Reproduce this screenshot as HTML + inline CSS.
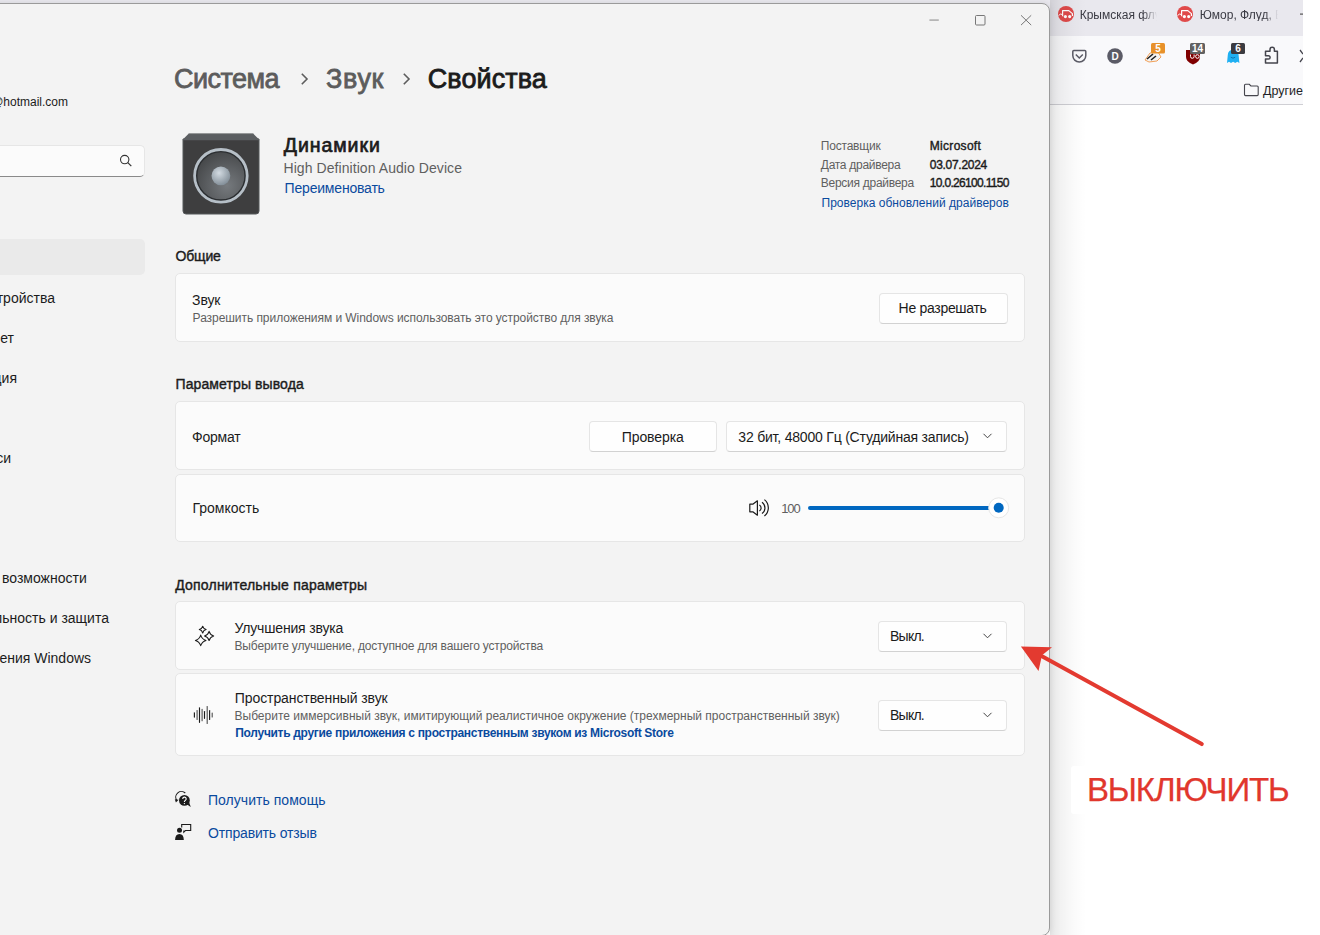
<!DOCTYPE html>
<html><head><meta charset="utf-8">
<style>
html,body{margin:0;padding:0;}
body{width:1320px;height:935px;overflow:hidden;position:relative;background:#ffffff;font-family:"Liberation Sans",sans-serif;}
.t{position:absolute;white-space:nowrap;line-height:1;}
.abs{position:absolute;}
#browser{position:absolute;left:0;top:0;width:1303px;height:935px;background:#ffffff;overflow:hidden;}
#tabbar{position:absolute;left:0;top:0;width:1303px;height:36px;background:#e9e8ee;}
#toolbar{position:absolute;left:0;top:36px;width:1303px;height:68px;background:#f9f9fb;border-bottom:1px solid #cfcfd4;}
#win{position:absolute;left:-20px;top:3px;width:1068px;height:931px;background:#f3f3f3;border:1px solid #9a9a9a;border-radius:0 8px 8px 0;box-shadow:0 0 6px rgba(0,0,0,0.10);overflow:hidden;}
#winin{position:absolute;left:19px;top:-4px;width:1049px;height:935px;}
.card{position:absolute;left:175px;width:848px;background:#fbfbfb;border:1px solid #e6e6e6;border-radius:5px;}
.btn{position:absolute;background:#fefefe;border:1px solid #e5e5e5;border-bottom-color:#d2d2d2;border-radius:4px;box-sizing:border-box;}
</style></head>
<body>
<div id="browser">
  <div id="tabbar"></div>
  <div id="toolbar"></div>
  <svg class="abs" style="left:1050px;top:0" width="270" height="110" viewBox="1050 0 270 110">
    <!-- tab favicons -->
    <circle cx="1066" cy="14" r="8" fill="#e04a4a"/>
    <g transform="translate(0,0)"><path d="M1062.6 16.2 V10.6 H1068.8 L1072.4 13.6 V16" fill="none" stroke="#fff" stroke-width="1.2" stroke-linejoin="round"/>
    <path d="M1058.6 15.6 q1.6 -2.4 3.6 -1.2" fill="none" stroke="#fff" stroke-width="1"/>
    <circle cx="1065.4" cy="16.6" r="1.6" fill="#fff"/><circle cx="1069.7" cy="16.6" r="1.6" fill="#fff"/></g>
    <circle cx="1185" cy="14" r="8" fill="#e04a4a"/>
    <g transform="translate(119,0)"><path d="M1062.6 16.2 V10.6 H1068.8 L1072.4 13.6 V16" fill="none" stroke="#fff" stroke-width="1.2" stroke-linejoin="round"/>
    <path d="M1058.6 15.6 q1.6 -2.4 3.6 -1.2" fill="none" stroke="#fff" stroke-width="1"/>
    <circle cx="1065.4" cy="16.6" r="1.6" fill="#fff"/><circle cx="1069.7" cy="16.6" r="1.6" fill="#fff"/></g>
    <rect x="1300" y="13.5" width="3" height="1.2" fill="#555"/>
    <!-- pocket -->
    <path d="M1073.8 50.5 h11 a1 1 0 0 1 1 1 v4 a6.5 6.5 0 0 1 -13 0 v-4 a1 1 0 0 1 1 -1z" fill="none" stroke="#5b5b66" stroke-width="1.5"/>
    <path d="M1075.8 54.5 l3.5 3.5 l3.5 -3.5" fill="none" stroke="#5b5b66" stroke-width="1.5"/>
    <!-- D -->
    <circle cx="1115" cy="56" r="7.8" fill="#5b5b66"/>
    <text x="1115" y="59.6" font-family="Liberation Sans" font-weight="bold" font-size="10" fill="#fff" text-anchor="middle">D</text>
    <!-- badger -->
    <path d="M1145 60 l5 -7 l8 -1 l3 5 l-4 4 l-8 1z" fill="#f3f3f3" stroke="#f08a30" stroke-width="0.8"/>
    <path d="M1147 59 l6 -5 M1151 60 l5 -4" stroke="#222" stroke-width="1.6"/>
    <rect x="1151" y="43" width="14" height="10.5" rx="1.5" fill="#e8912a"/>
    <text x="1158" y="52" font-family="Liberation Sans" font-weight="bold" font-size="10" fill="#fff" text-anchor="middle">5</text>
    <!-- ublock -->
    <path d="M1186 50 h14 v7 q0 5 -7 7.5 q-7 -2.5 -7 -7.5z" fill="#800000"/>
    <path d="M1190.5 54.5 v2 a1.8 1.8 0 0 0 3.6 0 v-2 M1195.6 56.5 a1.8 1.8 0 1 0 3.6 0 a1.8 1.8 0 1 0 -3.6 0" fill="none" stroke="#fff" stroke-width="1"/>
    <rect x="1190" y="43" width="15" height="11" rx="1.5" fill="#616161"/>
    <text x="1197.5" y="52" font-family="Liberation Sans" font-weight="bold" font-size="10" fill="#fff" text-anchor="middle">14</text>
    <!-- ghost -->
    <path d="M1227 63 l0.8 -8 a5.4 5.6 0 0 1 10.8 0 l0.8 8 l-2.1 -1.3 l-2.1 1.3 l-2.1 -1.3 l-2.1 1.3 l-2 -1.3z" fill="#1fb0f2"/>
    <path d="M1230.8 57.2 q2.2 2 4.4 0" fill="none" stroke="#0b6fa8" stroke-width="0.9"/>
    <rect x="1231" y="43" width="14" height="11" rx="1.5" fill="#3b3b40"/>
    <text x="1238" y="52" font-family="Liberation Sans" font-weight="bold" font-size="10" fill="#fff" text-anchor="middle">6</text>
    <!-- puzzle -->
    <path d="M1265.5 63 v-4 h3 a1.6 1.6 0 0 0 0 -3.2 h-3 v-4.5 h4.5 v-1.8 a2.2 2.2 0 0 1 4.4 0 v1.8 h3 v11.7z" fill="none" stroke="#45454d" stroke-width="1.5" stroke-linejoin="round"/>
    <path d="M1300 50 l3 4 M1300 62 l3 -4" stroke="#45454d" stroke-width="1.3"/>
    <!-- folder -->
    <path d="M1245.5 84.3 h3.8 l1.6 1.7 h6.3 a1 1 0 0 1 1 1 v7.6 a1 1 0 0 1 -1 1 h-11.7 a1 1 0 0 1 -1 -1 v-9.3 a1 1 0 0 1 1 -1z" fill="none" stroke="#45454d" stroke-width="1.1"/>
  </svg>
  <!-- fade tab text -->
  <div class="t" style="left:1079.70px;top:8.96px;font-size:12px;color:#3b3b44;width:77px;overflow:hidden;-webkit-mask-image:linear-gradient(90deg,#000 82%,transparent 100%);">Крымская флуд</div>
<div class="t" style="left:1199.80px;top:8.96px;font-size:12px;color:#3b3b44;width:78px;overflow:hidden;-webkit-mask-image:linear-gradient(90deg,#000 84%,transparent 100%);">Юмор, Флуд, Болталка</div>
<div class="t" style="left:1263.00px;top:84.94px;font-size:12.5px;color:#1f1f27;">Другие</div>
</div>

<div class="abs" style="left:1050px;top:0;width:36px;height:935px;background:linear-gradient(90deg,rgba(0,0,0,0.10),rgba(0,0,0,0.05) 30%,rgba(0,0,0,0.02) 65%,rgba(0,0,0,0));"></div>
<div id="win"><div id="winin">
  <!-- window controls -->
  <svg class="abs" style="left:900px;top:0" width="149" height="40" viewBox="900 0 149 40">
    <rect x="929.4" y="19.6" width="9.4" height="0.9" fill="#7a7a7a"/>
    <rect x="975.5" y="15.5" width="9.5" height="9.5" rx="1" fill="none" stroke="#777" stroke-width="1"/>
    <path d="M1021 15.3 L1031.2 25.1 M1031.2 15.3 L1021 25.1" stroke="#777" stroke-width="1"/>
  </svg>
  <!-- nav -->
  <div class="abs" style="left:-20px;top:145px;width:165px;height:32px;background:#fbfbfb;border:1px solid #e6e6e6;border-bottom:1px solid #8a8a8a;border-radius:5px;box-sizing:border-box;"></div>
  <svg class="abs" style="left:118px;top:152px" width="16" height="18" viewBox="118 152 16 18">
    <circle cx="124.7" cy="159.6" r="4.2" fill="none" stroke="#333" stroke-width="1.1"/>
    <path d="M127.8 162.7 L131.3 166.2" stroke="#333" stroke-width="1.2"/>
  </svg>
  <div class="abs" style="left:-20px;top:239px;width:165px;height:36px;background:#eaeaea;border-radius:5px;"></div>

  <!-- speaker image -->
  <svg class="abs" style="left:180px;top:131px" width="84" height="86" viewBox="180 131 84 86">
    <defs>
      <radialGradient id="cone" cx="0.62" cy="0.7" r="0.75">
        <stop offset="0" stop-color="#767a7e"/><stop offset="1" stop-color="#434547"/>
      </radialGradient>
      <radialGradient id="dome" cx="0.4" cy="0.35" r="0.7">
        <stop offset="0" stop-color="#d3dbe2"/><stop offset="1" stop-color="#7f8b95"/>
      </radialGradient>
    </defs>
    <path d="M183 139 V211 a3 3 0 0 0 3 3 H256 a3 3 0 0 0 3 -3 V139z" fill="#3e3e3f" stroke="#55585b" stroke-width="1"/>
    <path d="M188.6 133.8 H253.4 L259.2 139.6 V140.2 H182.8 V139.6z" fill="#5b5e61"/>
    <path d="M188.6 133.8 H253.4" stroke="#6a6d70" stroke-width="0.8"/>
    <circle cx="220.9" cy="175.8" r="24.6" fill="url(#cone)" stroke="#2b2e31" stroke-width="2.2"/>
    <circle cx="220.9" cy="175.8" r="26.3" fill="none" stroke="#b6bfc7" stroke-width="2.8"/>
    <circle cx="220.9" cy="175.8" r="9.4" fill="url(#dome)"/>
  </svg>

  <!-- cards -->
  <div class="card" style="top:273px;height:67px;"></div>
  <div class="card" style="top:401px;height:67px;"></div>
  <div class="card" style="top:474px;height:66px;"></div>
  <div class="card" style="top:601px;height:67px;"></div>
  <div class="card" style="top:673px;height:81px;"></div>

  <div class="btn" style="left:878.5px;top:292.5px;width:129px;height:31.5px;"></div>
  <div class="btn" style="left:589px;top:421px;width:128px;height:31px;"></div>
  <div class="btn" style="left:726px;top:421px;width:281px;height:31px;"></div>
  <div class="btn" style="left:878px;top:621px;width:129px;height:31px;"></div>
  <div class="btn" style="left:878px;top:700px;width:129px;height:31px;"></div>

  <svg class="abs" style="left:0;top:0" width="1049" height="935" viewBox="0 0 1049 935">
    <!-- dropdown chevrons -->
    <path d="M983.5 433.8 l4 4 l4 -4" fill="none" stroke="#444" stroke-width="1"/>
    <path d="M983.5 633.8 l4 4 l4 -4" fill="none" stroke="#444" stroke-width="1"/>
    <path d="M983.5 712.8 l4 4 l4 -4" fill="none" stroke="#444" stroke-width="1"/>
    <!-- breadcrumb chevrons -->
    <path d="M301.8 73.8 l5.2 5.2 l-5.2 5.2" fill="none" stroke="#5c5c5c" stroke-width="1.6"/>
    <path d="M403.8 73.8 l5.2 5.2 l-5.2 5.2" fill="none" stroke="#5c5c5c" stroke-width="1.6"/>
    <!-- volume icon -->
    <g fill="none" stroke="#1b1b1b" stroke-width="1.2">
    <path d="M749.8 504.2 h3 l4.6 -3.4 v14.4 l-4.6 -3.4 h-3z" stroke-linejoin="round"/>
    <path d="M759.4 504.9 A3.5 3.5 0 0 1 759.4 510.9"/>
    <path d="M762 502.2 A7 7 0 0 1 762 513.6"/>
    <path d="M764.4 499.6 A10.5 10.5 0 0 1 764.4 516"/>
    </g>
    <!-- slider -->
    <rect x="808" y="506" width="190" height="4" rx="2" fill="#0067c0"/>
    <circle cx="998.7" cy="507.8" r="10" fill="#ffffff" stroke="#e6e6e6" stroke-width="1"/>
    <circle cx="998.7" cy="507.8" r="5" fill="#0067c0"/>
    <!-- sparkle -->
    <g fill="none" stroke="#1b1b1b" stroke-width="1.05" stroke-linejoin="round">
      <path d="M202.7 626.2 q0.7 2.7 3.4 3.4 q-2.7 0.7 -3.4 3.4 q-0.7 -2.7 -3.4 -3.4 q2.7 -0.7 3.4 -3.4z"/>
      <path d="M209.1 631.3 q1 3.6 4.6 4.6 q-3.6 1 -4.6 4.6 q-1 -3.6 -4.6 -4.6 q3.6 -1 4.6 -4.6z"/>
      <path d="M200.7 635.1 q1.2 4.1 5.3 5.3 q-4.1 1.2 -5.3 5.3 q-1.2 -4.1 -5.3 -5.3 q4.1 -1.2 5.3 -5.3z"/>
    </g>
    <!-- waveform -->
    <g stroke="#1b1b1b" stroke-width="1.15" stroke-linecap="round">
      <path d="M194.4 712.8 v4.3"/><path d="M197.1 710.6 v8.8" stroke="#555"/><path d="M199.5 707.8 v14.5"/>
      <path d="M202.1 709.4 v11.3" stroke="#555"/><path d="M204.5 711.5 v6.8"/><path d="M207.2 706.6 v16.8" stroke="#555"/>
      <path d="M209.6 710.6 v8.8"/><path d="M212.2 713 v4" stroke="#555"/>
    </g>
    <!-- help icon -->
    <circle cx="184.4" cy="800.4" r="5.4" fill="#1b1b1b"/>
    <path d="M186.8 804.3 l4 2.6 l-1.6 -4.2z" fill="#1b1b1b"/>
    <path d="M182.7 798.9 a1.75 1.75 0 1 1 2.6 1.5 q-0.9 0.4 -0.9 1.3 v0.4" fill="none" stroke="#fff" stroke-width="1.1"/>
    <circle cx="184.4" cy="803.6" r="0.7" fill="#fff"/>
    <path d="M176.6 800.2 A5.7 5.7 0 0 1 185.3 793" fill="none" stroke="#1b1b1b" stroke-width="1.1"/>
    <path d="M174.8 799.3 L178.6 799.8 L175.9 802.4z" fill="#1b1b1b"/>
    <!-- feedback icon -->
    <circle cx="179.5" cy="830.3" r="2.5" fill="#1b1b1b"/>
    <path d="M175.1 840 q0 -6 4.35 -6 q4.35 0 4.35 6z" fill="#1b1b1b"/>
    <path d="M181.7 827.5 v-3 h9 v6 h-5.3 l-1.6 1.6 v-1.6" fill="none" stroke="#1b1b1b" stroke-width="1.1"/>
  </svg>

  <div class="t" style="left:-64.90px;top:95.86px;font-size:12px;color:#1b1b1b;">user.name@hotmail.com</div>
<div class="t" style="left:-91.93px;top:291.17px;font-size:14px;color:#1b1b1b;">Bluetooth и устройства</div>
<div class="t" style="left:-93.80px;top:331.17px;font-size:14px;color:#1b1b1b;">Сеть и Интернет</div>
<div class="t" style="left:-92.69px;top:371.17px;font-size:14px;color:#1b1b1b;">Персонализация</div>
<div class="t" style="left:-92.81px;top:451.17px;font-size:14px;color:#1b1b1b;">Учетные записи</div>
<div class="t" style="left:-92.01px;top:571.17px;font-size:14px;color:#1b1b1b;">Специальные возможности</div>
<div class="t" style="left:-96.24px;top:611.17px;font-size:14px;color:#1b1b1b;">Конфиденциальность и защита</div>
<div class="t" style="left:-91.14px;top:651.17px;font-size:14px;color:#1b1b1b;">Центр обновления Windows</div>
<div class="t" style="left:174.00px;top:66.19px;font-size:27px;color:#5c5c5c;-webkit-text-stroke:0.8px #5c5c5c;letter-spacing:-0.535px;">Система</div>
<div class="t" style="left:326.00px;top:66.19px;font-size:27px;color:#5c5c5c;-webkit-text-stroke:0.8px #5c5c5c;letter-spacing:0.660px;">Звук</div>
<div class="t" style="left:427.80px;top:66.19px;font-size:27px;color:#1b1b1b;-webkit-text-stroke:0.8px #1b1b1b;letter-spacing:0.076px;">Свойства</div>
<div class="t" style="left:283.75px;top:136.22px;font-size:19.5px;color:#1b1b1b;-webkit-text-stroke:0.7px #1b1b1b;letter-spacing:0.942px;">Динамики</div>
<div class="t" style="left:283.50px;top:161.17px;font-size:14px;color:#5f5f5f;letter-spacing:0.067px;">High Definition Audio Device</div>
<div class="t" style="left:284.60px;top:181.17px;font-size:14px;color:#0a4a9e;letter-spacing:-0.193px;">Переименовать</div>
<div class="t" style="left:820.80px;top:139.96px;font-size:12px;color:#5f5f5f;letter-spacing:-0.202px;">Поставщик</div>
<div class="t" style="left:820.80px;top:159.06px;font-size:12px;color:#5f5f5f;letter-spacing:-0.282px;">Дата драйвера</div>
<div class="t" style="left:820.80px;top:177.36px;font-size:12px;color:#5f5f5f;letter-spacing:-0.276px;">Версия драйвера</div>
<div class="t" style="left:929.80px;top:139.96px;font-size:12px;color:#1b1b1b;-webkit-text-stroke:0.4px #1b1b1b;letter-spacing:0.293px;">Microsoft</div>
<div class="t" style="left:929.80px;top:159.06px;font-size:12px;color:#1b1b1b;-webkit-text-stroke:0.4px #1b1b1b;letter-spacing:-0.296px;">03.07.2024</div>
<div class="t" style="left:929.80px;top:177.36px;font-size:12px;color:#1b1b1b;-webkit-text-stroke:0.4px #1b1b1b;letter-spacing:-0.680px;">10.0.26100.1150</div>
<div class="t" style="left:821.50px;top:197.26px;font-size:12px;color:#0a4a9e;letter-spacing:0.022px;">Проверка обновлений драйверов</div>
<div class="t" style="left:175.60px;top:249.17px;font-size:14px;color:#1b1b1b;-webkit-text-stroke:0.4px #1b1b1b;letter-spacing:-0.190px;">Общие</div>
<div class="t" style="left:175.50px;top:377.17px;font-size:14px;color:#1b1b1b;-webkit-text-stroke:0.4px #1b1b1b;letter-spacing:0.102px;">Параметры вывода</div>
<div class="t" style="left:175.20px;top:577.77px;font-size:14px;color:#1b1b1b;-webkit-text-stroke:0.4px #1b1b1b;letter-spacing:0.217px;">Дополнительные параметры</div>
<div class="t" style="left:192.10px;top:292.97px;font-size:14px;color:#1b1b1b;letter-spacing:-0.113px;">Звук</div>
<div class="t" style="left:192.60px;top:311.86px;font-size:12px;color:#5f5f5f;letter-spacing:-0.057px;">Разрешить приложениям и Windows использовать это устройство для звука</div>
<div class="t" style="left:898.60px;top:300.97px;font-size:14px;color:#1b1b1b;letter-spacing:-0.303px;">Не разрешать</div>
<div class="t" style="left:192.00px;top:429.97px;font-size:14px;color:#1b1b1b;letter-spacing:-0.200px;">Формат</div>
<div class="t" style="left:621.70px;top:429.67px;font-size:14px;color:#1b1b1b;letter-spacing:-0.070px;">Проверка</div>
<div class="t" style="left:738.30px;top:429.67px;font-size:14px;color:#1b1b1b;letter-spacing:-0.200px;">32 бит, 48000 Гц (Студийная запись)</div>
<div class="t" style="left:192.50px;top:501.27px;font-size:14px;color:#1b1b1b;letter-spacing:-0.010px;">Громкость</div>
<div class="t" style="left:781.20px;top:501.51px;font-size:13px;color:#5f5f5f;letter-spacing:-1.105px;">100</div>
<div class="t" style="left:234.50px;top:621.17px;font-size:14px;color:#1b1b1b;letter-spacing:-0.171px;">Улучшения звука</div>
<div class="t" style="left:234.50px;top:640.26px;font-size:12px;color:#5f5f5f;letter-spacing:-0.164px;">Выберите улучшение, доступное для вашего устройства</div>
<div class="t" style="left:890.00px;top:629.17px;font-size:14px;color:#1b1b1b;letter-spacing:-0.758px;">Выкл.</div>
<div class="t" style="left:234.80px;top:691.27px;font-size:14px;color:#1b1b1b;letter-spacing:-0.092px;">Пространственный звук</div>
<div class="t" style="left:234.50px;top:710.06px;font-size:12px;color:#5f5f5f;">Выберите иммерсивный звук, имитирующий реалистичное окружение (трехмерный пространственный звук)</div>
<div class="t" style="left:235.30px;top:726.96px;font-size:12px;color:#0a4a9e;font-weight:bold;letter-spacing:-0.303px;">Получить другие приложения с пространственным звуком из Microsoft Store</div>
<div class="t" style="left:890.00px;top:708.17px;font-size:14px;color:#1b1b1b;letter-spacing:-0.758px;">Выкл.</div>
<div class="t" style="left:208.00px;top:793.17px;font-size:14px;color:#0a4a9e;letter-spacing:0.033px;">Получить помощь</div>
<div class="t" style="left:208.00px;top:825.87px;font-size:14px;color:#0a4a9e;letter-spacing:-0.164px;">Отправить отзыв</div>
</div></div>

<!-- annotation -->
<div class="abs" style="left:1071px;top:766px;width:230px;height:48px;background:#ffffff;border-radius:3px;"></div>
<svg class="abs" style="left:1000px;top:620px" width="220" height="140" viewBox="1000 620 220 140">
  <path d="M1042 656.3 L1201.8 744.1" stroke="#e33a30" stroke-width="4" stroke-linecap="round"/>
  <path d="M1020.9 646.4 L1052 647.2 L1042 655.3 L1038.5 671z" fill="#e33a30"/>
</svg>
<div class="t" style="left:1086.92px;top:773.12px;font-size:33px;color:#e1372d;-webkit-text-stroke:0.25px #e1372d;letter-spacing:-1.139px;">ВЫКЛЮЧИТЬ</div>
</body></html>
